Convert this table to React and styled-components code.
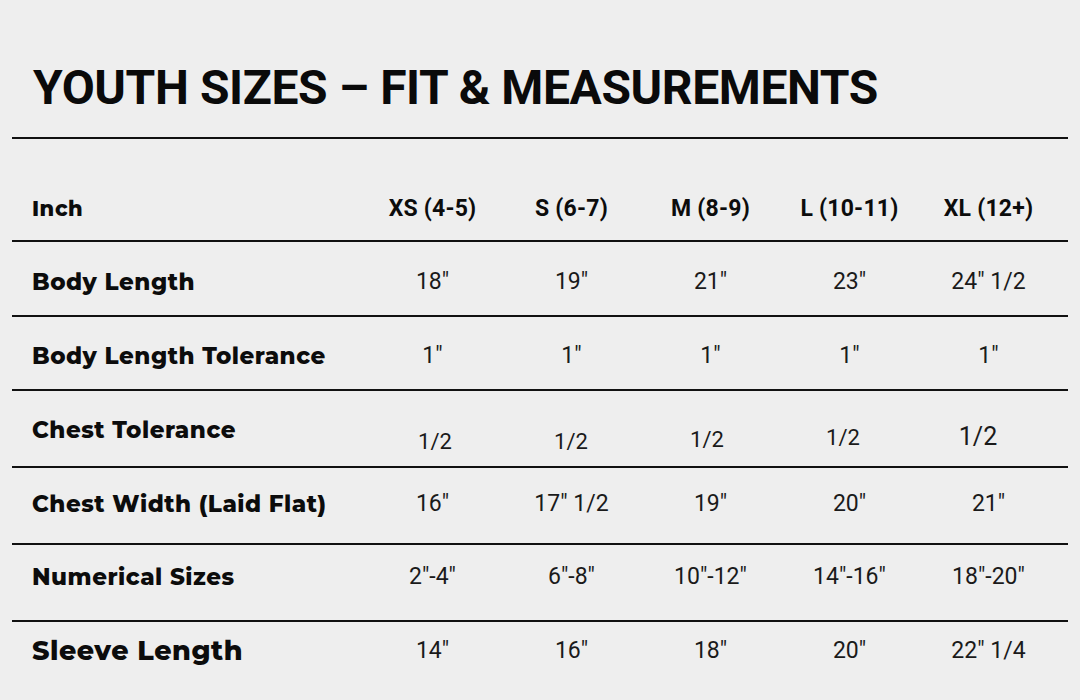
import React from "react";
import styled, { createGlobalStyle } from "styled-components";

const Global = createGlobalStyle`
  html, body { margin: 0; padding: 0; background: #eeeeee; }
  body { width: 1080px; height: 700px; overflow: hidden; font-family: "Open Sans", sans-serif; color: #111; }
`;

const Page = styled.div`
  width: 1080px;
  height: 700px;
  background: #eeeeee;
  padding: 58px 12px 0 12px;
  box-sizing: border-box;
`;

const Title = styled.h1`
  margin: 0 0 0 21px;
  height: 79px;
  font-family: Roboto, "Liberation Sans", sans-serif;
  font-weight: 700;
  font-size: 48px;
  line-height: 60px;
  letter-spacing: -0.4px;
  color: #0a0a0a;
`;

const Table = styled.div`
  display: flex;
  flex-direction: column;
`;

const Row = styled.div`
  display: grid;
  grid-template-columns: 351px repeat(5, 139px);
  align-items: start;
  border-top: 2px solid #111;
  height: ${(p) => p.$h}px;
  box-sizing: border-box;
  padding-top: ${(p) => p.$pt}px;
  line-height: 30px;
`;

const Label = styled.div`
  padding-left: 20px;
  font-family: Montserrat, "Open Sans", sans-serif;
  font-weight: 800;
  font-size: ${(p) => p.$size}px;
  letter-spacing: 0.5px;
  color: #0c0c0c;
  white-space: nowrap;
`;

const Head = styled.div`
  text-align: center;
  font-family: Roboto, "Liberation Sans", sans-serif;
  font-weight: 700;
  font-size: 23px;
  letter-spacing: 0.2px;
  color: #0c0c0c;
  white-space: nowrap;
`;

const Cell = styled.div`
  text-align: center;
  font-family: Roboto, "Liberation Sans", sans-serif;
  font-weight: 400;
  font-size: 23px;
  color: #1a1a1a;
  white-space: nowrap;
`;

const Frac = styled(Cell)`
  font-size: ${(p) => p.$size}px;
  padding-top: ${(p) => p.$drop}px;
  padding-left: ${(p) => Math.max(0, p.$shift * 2)}px;
  padding-right: ${(p) => Math.max(0, -p.$shift * 2)}px;
`;

const sizes = ["XS (4-5)", "S (6-7)", "M (8-9)", "L (10-11)", "XL (12+)"];

const rows = [
  { label: "Body Length", vals: ['18"', '19"', '21"', '23"', '24" 1/2'], h: 75, pt: 25 },
  { label: "Body Length Tolerance", vals: ['1"', '1"', '1"', '1"', '1"'], h: 74, pt: 24 },
  { label: "Chest Tolerance", frac: true, h: 77, pt: 24 },
  { label: "Chest Width (Laid Flat)", vals: ['16"', '17" 1/2', '19"', '20"', '21"'], h: 77, pt: 21 },
  { label: "Numerical Sizes", vals: ['2"-4"', '6"-8"', '10"-12"', '14"-16"', '18"-20"'], h: 77, pt: 17 },
  { label: "Sleeve Length", vals: ['14"', '16"', '18"', '20"', '22" 1/4'], h: 79, pt: 14, big: true },
];

const fracs = [
  { drop: 12, shift: 2.5, size: 22 },
  { drop: 12, shift: -0.5, size: 22 },
  { drop: 10, shift: -3.5, size: 22 },
  { drop: 8, shift: -6.5, size: 22 },
  { drop: 7, shift: -10.5, size: 25 },
];

export default function App() {
  return (
    <Page>
      <Global />
      <Title>YOUTH SIZES – FIT &amp; MEASUREMENTS</Title>
      <Table>
        <Row $h={103} $pt={55}>
          <Label $size={21}>Inch</Label>
          {sizes.map((s) => (
            <Head key={s}>{s}</Head>
          ))}
        </Row>
        {rows.map((r) => (
          <Row key={r.label} $h={r.h} $pt={r.pt}>
            <Label $size={r.big ? 27 : 23}>{r.label}</Label>
            {r.frac
              ? fracs.map((f, i) => (
                  <Frac key={i} $drop={f.drop} $shift={f.shift} $size={f.size}>
                    1/2
                  </Frac>
                ))
              : r.vals.map((v, i) => <Cell key={i}>{v}</Cell>)}
          </Row>
        ))}
      </Table>
    </Page>
  );
}
